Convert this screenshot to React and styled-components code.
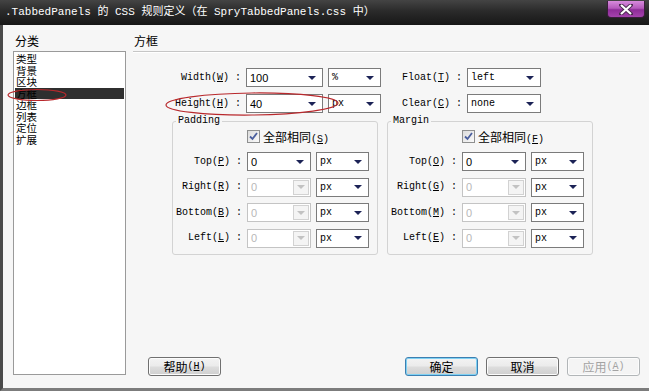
import styled, { createGlobalStyle } from "styled-components";

const MONO = `"Liberation Mono", "Noto Sans CJK SC", monospace`;
const SANS = `"Liberation Sans", "Noto Sans CJK SC", sans-serif`;
const CJK = `"Noto Sans CJK SC", "Liberation Sans", sans-serif`;

const GlobalStyle = createGlobalStyle`
  html, body {
    margin: 0;
    padding: 0;
    background: #f6f6f6;
  }
  body {
    width: 649px;
    height: 391px;
    overflow: hidden;
  }
  * {
    box-sizing: border-box;
  }
`;

const Window = styled.div`
  position: relative;
  width: 649px;
  height: 391px;
  display: flex;
  flex-direction: column;
  background: #f6f6f6;
  overflow: hidden;
`;

const TitleBar = styled.div`
  height: 25px;
  flex: none;
  display: flex;
  justify-content: space-between;
  align-items: flex-start;
  padding: 0 4px 0 5px;
  background: linear-gradient(#444 0%, #2a2a2a 45%, #171717 100%);
`;

const Title = styled.div`
  color: #fff;
  font-family: ${MONO};
  font-size: 11px;
  line-height: 25px;
  white-space: pre;
`;

const CloseButton = styled.div`
  width: 38px;
  height: 17px;
  margin-top: 1px;
  display: flex;
  align-items: center;
  justify-content: center;
  border: 1px solid #3a1d3c;
  border-top: none;
  border-radius: 0 0 4px 4px;
  background: linear-gradient(#d78bdc 0%, #b55abc 45%, #8e2c98 55%, #a443ad 100%);
`;

const Body = styled.div`
  flex: 1;
  display: flex;
  gap: 7px;
  padding: 9px 9px 0 10px;
  border-left: 3px solid #4a4a4a;
  border-bottom: 3px solid #7c7c7c;
  min-height: 0;
`;

const Sidebar = styled.div`
  width: 113px;
  flex: none;
  display: flex;
  flex-direction: column;
  padding-bottom: 13px;
`;

const Caption = styled.div`
  font-family: ${CJK};
  font-size: 12px;
  line-height: 14px;
  margin: 0 0 3px 2px;
  color: #000;
`;

const CategoryList = styled.div`
  flex: 1;
  background: #fff;
  border: 1px solid #9a9a9a;
  padding: 1px 1px 0;
`;

const Category = styled.div`
  font-family: ${CJK};
  font-size: 10.5px;
  line-height: 11.5px;
  height: 11.5px;
  padding-left: 1px;
  color: #000;
  background: ${(p) => (p.$active ? "#2f2f2f" : "transparent")};
`;

const Main = styled.div`
  flex: 1;
  display: flex;
  flex-direction: column;
  min-width: 0;
`;

const Heading = styled.div`
  font-family: ${CJK};
  font-size: 12px;
  line-height: 14px;
  margin: 0 0 3px 1px;
  color: #000;
`;

const Rule = styled.div`
  height: 1px;
  background: #c6c6c6;
  box-shadow: 0 1px 0 #fff;
`;

const TopGrid = styled.div`
  display: grid;
  grid-template-columns: 108px 77px 53px 76px 74px;
  grid-auto-rows: 19px;
  column-gap: 5px;
  row-gap: 7px;
  margin-top: 16px;
`;

const Label = styled.div`
  justify-self: end;
  align-self: center;
  font-family: ${MONO};
  font-size: 10px;
  line-height: 12px;
  white-space: pre;
  color: #000;

  u {
    text-underline-offset: 1px;
  }
`;

const Colon = styled.span`
  margin-left: 6px;
`;

const Combo = styled.div`
  height: 19px;
  display: flex;
  align-items: center;
  border: 1px solid ${(p) => (p.$disabled ? "#c4c4c4" : "#7b7b7b")};
  background: #fff;
  padding: 0 1px 0 3px;
`;

const ComboValue = styled.span`
  flex: 1;
  font-family: ${(p) => (p.$sans ? SANS : MONO)};
  font-size: ${(p) => (p.$sans ? "11px" : "10px")};
  color: ${(p) => (p.$disabled ? "#b8b8b8" : "#000")};
  white-space: pre;
`;

const Arrow = styled.span`
  width: 0;
  height: 0;
  margin-right: 5px;
  border-left: 4px solid transparent;
  border-right: 4px solid transparent;
  border-top: 4px solid ${(p) => (p.$disabled ? "#c2c2c2" : "#1c2356")};
`;

const ArrowBox = styled.span`
  width: 16px;
  height: 15px;
  display: flex;
  align-items: center;
  justify-content: center;
  border: 1px solid #d2d2d2;
  background: #f4f4f4;

  ${Arrow} {
    margin-right: 0;
  }
`;

const Groups = styled.div`
  display: flex;
  gap: 9px;
  margin: 2px 0 0 39px;
`;

const Group = styled.fieldset`
  width: 206px;
  margin: 0;
  padding: 0 8px 6px 0;
  border: 1px solid #d3d3d3;
  border-radius: 3px;
  min-width: 0;
`;

const Legend = styled.legend`
  margin-left: 3px;
  padding: 0 2px;
  font-family: ${MONO};
  font-size: 10px;
  line-height: 12px;
  color: #000;
`;

const GroupGrid = styled.div`
  display: grid;
  grid-template-columns: 69px 64px 53px;
  grid-auto-rows: 19px;
  column-gap: 5px;
  row-gap: 6.5px;
`;

const SameRow = styled.div`
  grid-column: 2 / 4;
  height: 13px;
  margin-top: 3px;
  display: flex;
  align-items: center;
  gap: 3px;
  font-family: ${CJK};
  font-size: 12px;
  color: #000;
`;

const GroupGridRows = styled(GroupGrid)`
  margin-top: 6px;
`;

const Checkbox = styled.span`
  width: 13px;
  height: 13px;
  display: flex;
  align-items: center;
  justify-content: center;
  border: 1px solid #8e8f8f;
  background: linear-gradient(135deg, #dcdcdc, #fafafa);
`;

const Mnemonic = styled.span`
  font-family: ${MONO};
  font-size: 10px;

  u {
    text-underline-offset: 1px;
  }
`;

const Footer = styled.div`
  margin-top: auto;
  display: flex;
  align-items: center;
  gap: 8px;
  padding: 0 0 12px 15px;
`;

const Spacer = styled.div`
  flex: 1;
`;

const Button = styled.div`
  width: 73px;
  height: 19px;
  display: flex;
  align-items: center;
  justify-content: center;
  border-radius: 3px;
  font-family: ${CJK};
  font-size: 12px;
  color: ${(p) => (p.$disabled ? "#a3a3a3" : "#000")};
  border: 1px solid
    ${(p) => (p.$primary ? "#3c7fb1" : p.$disabled ? "#b2b6b8" : "#707070")};
  background: ${(p) =>
    p.$disabled
      ? "#f4f4f4"
      : "linear-gradient(#f3f3f3 0%, #ebebeb 48%, #dddddd 52%, #cfcfcf 100%)"};
  box-shadow: ${(p) =>
    p.$primary ? "inset 0 0 0 1px #7fd1f3" : "inset 0 0 0 1px #fcfcfc"};
`;

const Annotations = styled.svg`
  position: absolute;
  left: 0;
  top: 0;
  pointer-events: none;
`;

const categories = ["类型", "背景", "区块", "方框", "边框", "列表", "定位", "扩展"];

const ComboBox = ({ value, sans, disabled }) => (
  <Combo $disabled={disabled}>
    <ComboValue $sans={sans} $disabled={disabled}>
      {value}
    </ComboValue>
    {disabled ? (
      <ArrowBox>
        <Arrow $disabled />
      </ArrowBox>
    ) : (
      <Arrow />
    )}
  </Combo>
);

const FieldLabel = ({ name, letter }) => (
  <Label>
    {name}(<u>{letter}</u>)<Colon>:</Colon>
  </Label>
);

const Check = () => (
  <Checkbox>
    <svg width="9" height="9" viewBox="0 0 9 9">
      <path d="M1 4.5 L3.5 7 L8 1" fill="none" stroke="#4b5f9e" strokeWidth="1.8" />
    </svg>
  </Checkbox>
);

const BoxGroup = ({ legend, same, rows }) => (
  <Group>
    <Legend>{legend}</Legend>
    <GroupGrid>
      <div />
      <SameRow>
        <Check />
        <span>
          全部相同<Mnemonic>(<u>{same}</u>)</Mnemonic>
        </span>
      </SameRow>
    </GroupGrid>
    <GroupGridRows>
      {rows.map(([name, letter], i) => (
        <>
          <FieldLabel key={name} name={name} letter={letter} />
          <ComboBox value="0" sans disabled={i > 0} />
          <ComboBox value="px" />
        </>
      ))}
    </GroupGridRows>
  </Group>
);

const App = () => {
  return (
    <Window>
      <GlobalStyle />
      <TitleBar>
        <Title>.TabbedPanels 的 CSS 规则定义（在 SpryTabbedPanels.css 中）</Title>
        <CloseButton>
          <svg width="14" height="11" viewBox="0 0 14 11">
            <path
              d="M2 1 L12 10 M12 1 L2 10"
              stroke="#4a2a4e"
              strokeWidth="4"
              strokeLinecap="round"
            />
            <path d="M2 1 L12 10 M12 1 L2 10" stroke="#fff" strokeWidth="2.2" />
          </svg>
        </CloseButton>
      </TitleBar>
      <Body>
        <Sidebar>
          <Caption>分类</Caption>
          <CategoryList>
            {categories.map((c) => (
              <Category key={c} $active={c === "方框"}>
                {c}
              </Category>
            ))}
          </CategoryList>
        </Sidebar>
        <Main>
          <Heading>方框</Heading>
          <Rule />
          <TopGrid>
            <FieldLabel name="Width" letter="W" />
            <ComboBox value="100" sans />
            <ComboBox value="%" />
            <FieldLabel name="Float" letter="T" />
            <ComboBox value="left" />
            <FieldLabel name="Height" letter="H" />
            <ComboBox value="40" sans />
            <ComboBox value="px" />
            <FieldLabel name="Clear" letter="C" />
            <ComboBox value="none" />
          </TopGrid>
          <Groups>
            <BoxGroup
              legend="Padding"
              same="S"
              rows={[
                ["Top", "P"],
                ["Right", "R"],
                ["Bottom", "B"],
                ["Left", "L"],
              ]}
            />
            <BoxGroup
              legend="Margin"
              same="F"
              rows={[
                ["Top", "O"],
                ["Right", "G"],
                ["Bottom", "M"],
                ["Left", "E"],
              ]}
            />
          </Groups>
          <Footer>
            <Button>
              帮助<Mnemonic>(<u>H</u>)</Mnemonic>
            </Button>
            <Spacer />
            <Button $primary>确定</Button>
            <Button>取消</Button>
            <Button $disabled>
              应用<Mnemonic>(<u>A</u>)</Mnemonic>
            </Button>
          </Footer>
        </Main>
      </Body>
      <Annotations width="649" height="391" viewBox="0 0 649 391">
        <ellipse cx="37" cy="95" rx="29" ry="5.5" fill="none" stroke="#b8282c" strokeWidth="1.2" />
        <ellipse
          cx="252"
          cy="104"
          rx="86"
          ry="11"
          fill="none"
          stroke="#b8282c"
          strokeWidth="1.2"
          transform="rotate(-0.6 252 104)"
        />
      </Annotations>
    </Window>
  );
};

export default App;
